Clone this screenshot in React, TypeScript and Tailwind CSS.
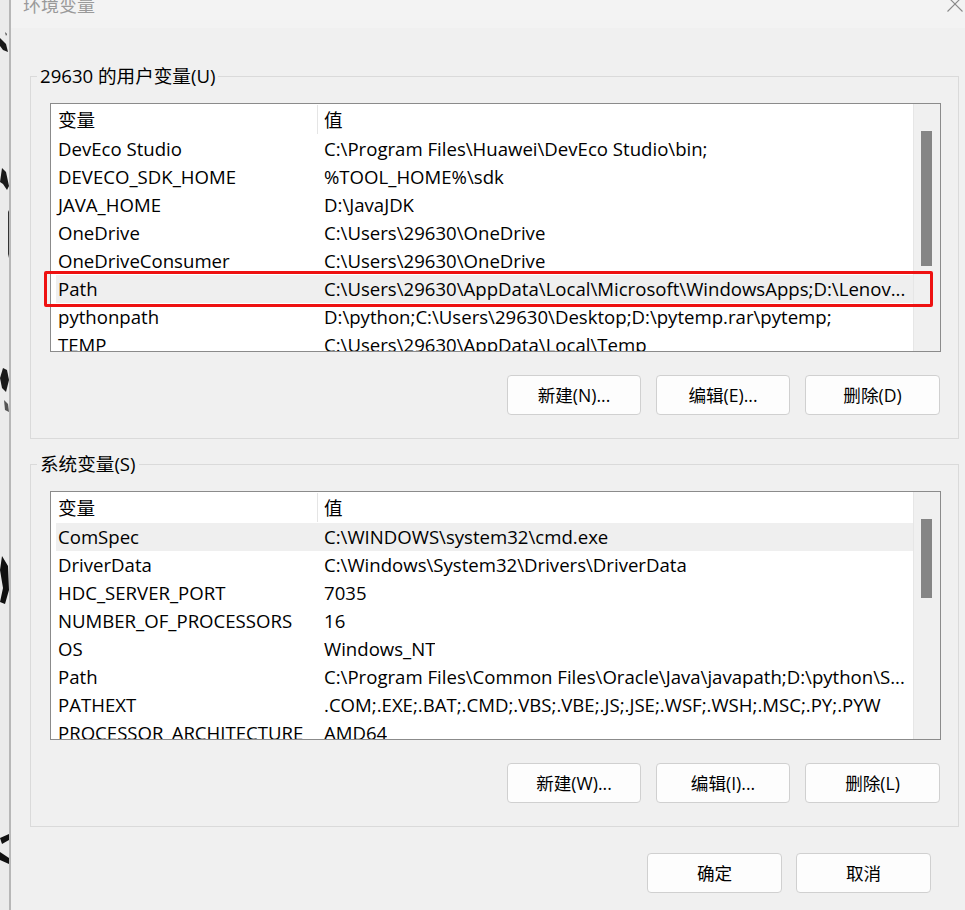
import React from "react";

type Row = { name: string; value: string };

const userVars: Row[] = [
  { name: "DevEco Studio", value: "C:\\Program Files\\Huawei\\DevEco Studio\\bin;" },
  { name: "DEVECO_SDK_HOME", value: "%TOOL_HOME%\\sdk" },
  { name: "JAVA_HOME", value: "D:\\JavaJDK" },
  { name: "OneDrive", value: "C:\\Users\\29630\\OneDrive" },
  { name: "OneDriveConsumer", value: "C:\\Users\\29630\\OneDrive" },
  { name: "Path", value: "C:\\Users\\29630\\AppData\\Local\\Microsoft\\WindowsApps;D:\\Lenov..." },
  { name: "pythonpath", value: "D:\\python;C:\\Users\\29630\\Desktop;D:\\pytemp.rar\\pytemp;" },
  { name: "TEMP", value: "C:\\Users\\29630\\AppData\\Local\\Temp" },
];

const systemVars: Row[] = [
  { name: "ComSpec", value: "C:\\WINDOWS\\system32\\cmd.exe" },
  { name: "DriverData", value: "C:\\Windows\\System32\\Drivers\\DriverData" },
  { name: "HDC_SERVER_PORT", value: "7035" },
  { name: "NUMBER_OF_PROCESSORS", value: "16" },
  { name: "OS", value: "Windows_NT" },
  { name: "Path", value: "C:\\Program Files\\Common Files\\Oracle\\Java\\javapath;D:\\python\\S..." },
  { name: "PATHEXT", value: ".COM;.EXE;.BAT;.CMD;.VBS;.VBE;.JS;.JSE;.WSF;.WSH;.MSC;.PY;.PYW" },
  { name: "PROCESSOR_ARCHITECTURE", value: "AMD64" },
];

function VarList({
  rows,
  selected,
  thumbHeight,
  marked,
}: {
  rows: Row[];
  selected: number;
  thumbHeight: string;
  marked?: number;
}) {
  return (
    <div className="relative w-[891px] h-[249px]">
      <div className="flex h-full border border-[#8b8b8b] bg-white overflow-hidden">
        <div className="flex-1 min-w-0 flex flex-col">
          {/* header */}
          <div className="flex h-[31px] shrink-0 items-center">
            <div className="w-[266px] pl-[7px]">变量</div>
            <div className="w-px h-[29px] bg-[#e5e5e5]" />
            <div className="pl-[6px]">值</div>
          </div>
          {rows.map((r, i) => (
            <div
              key={r.name + i}
              className={
                "flex h-[28px] shrink-0 items-center ml-[5px] whitespace-nowrap " +
                (i === selected ? "bg-[#efefef]" : "")
              }
            >
              <div className="w-[261px] shrink-0 pl-[2px] overflow-hidden">{r.name}</div>
              <div className="pl-[7px] overflow-hidden">{r.value}</div>
            </div>
          ))}
        </div>
        {/* scrollbar */}
        <div className="w-[27px] shrink-0 bg-[#f0f0f0] border-l border-[#e6e6e6] pt-[27px] pl-[7px]">
          <div className={"w-[11px] bg-[#858585] " + thumbHeight} />
        </div>
      </div>
      {marked !== undefined && (
        <div className="absolute left-[-6px] top-[168px] w-[889px] h-[36px] border-[3px] border-[#ee1111] rounded-[2px] pointer-events-none" />
      )}
    </div>
  );
}

function Btn({ label, w = "w-[134px]" }: { label: string; w?: string }) {
  return (
    <button
      className={
        "h-[40px] rounded-[4px] border border-[#d0d0d0] bg-[#fdfdfd] text-[17.6px] text-black " + w
      }
    >
      {label}
    </button>
  );
}

function Group({
  title,
  children,
  className = "",
}: {
  title: string;
  children: React.ReactNode;
  className?: string;
}) {
  return (
    <fieldset className={"border border-[#dadada] pl-[19px] pb-[23px] " + className}>
      <legend className="ml-[-13px] px-[3px] leading-[24px]">{title}</legend>
      <div className="pt-[15px]">{children}</div>
    </fieldset>
  );
}

function InkStrip() {
  // background wallpaper peeking out at the left edge
  return (
    <div className="w-[9px] shrink-0 bg-[#ebebeb]">
      <svg width="9" height="910" viewBox="0 0 9 910">
        <path d="M0 38 L6 44 L8 52 L3 50 L0 46 Z" fill="#1a1a1a" />
        <path d="M5 32 L7 34 L6 36 Z" fill="#444" />
        <path d="M2 168 L6 172 L9 186 L7 190 L3 184 L0 182 Z" fill="#1a1a1a" />
        <path d="M8 210 L9 212 L9 258 L8 254 Z" fill="#333" />
        <path d="M3 368 L7 370 L9 380 L6 392 L2 388 L0 378 Z" fill="#1a1a1a" />
        <path d="M4 400 L8 404 L9 412 L5 410 Z" fill="#555" />
        <path d="M2 556 L8 566 L9 590 L5 604 L0 602 L3 588 L0 570 Z" fill="#111" />
        <path d="M0 838 L9 834 L9 840 L2 844 Z" fill="#111" />
        <path d="M0 852 L9 858 L9 864 L0 860 Z" fill="#111" />
      </svg>
    </div>
  );
}

export default function App() {
  return (
    <div className="flex w-[965px] h-[910px] overflow-hidden bg-[#f0f0f0] text-[18.6px] text-black font-['Open_Sans','Noto_Sans_CJK_SC',sans-serif]">
      <InkStrip />
      <div className="w-[2px] shrink-0 bg-[#b7b7b7]" />
      <div className="flex-1 flex flex-col rounded-bl-[8px]">
        {/* title bar */}
        <div className="h-[28px] shrink-0 bg-[#f3f3f3] flex justify-between overflow-hidden">
          <div className="pl-[12px] mt-[-6px] leading-[22px] text-[18px] text-[#9a9a9a]">环境变量</div>
          <svg width="18" height="18" viewBox="0 0 18 18" className="mt-[-5px] mr-[1px]">
            <path d="M1.5 1.5 L16.5 16.5 M16.5 1.5 L1.5 16.5" stroke="#8a8a8a" strokeWidth="1.1" />
          </svg>
        </div>

        <div className="pl-[19px] pr-[6px] pt-[36px] flex flex-col">
          <Group title="29630 的用户变量(U)">
            <VarList rows={userVars} selected={5} thumbHeight="h-[135px]" marked={5} />
            <div className="flex justify-end gap-[15px] pr-[18px] mt-[23px]">
              <Btn label="新建(N)..." />
              <Btn label="编辑(E)..." />
              <Btn label="删除(D)" w="w-[135px]" />
            </div>
          </Group>

          <Group title="系统变量(S)" className="mt-[13px]">
            <VarList rows={systemVars} selected={0} thumbHeight="h-[79px]" />
            <div className="flex justify-end gap-[15px] pr-[18px] mt-[23px]">
              <Btn label="新建(W)..." />
              <Btn label="编辑(I)..." />
              <Btn label="删除(L)" w="w-[135px]" />
            </div>
          </Group>

          <div className="flex justify-end gap-[14px] pr-[28px] mt-[26px]">
            <Btn label="确定" w="w-[135px]" />
            <Btn label="取消" w="w-[135px]" />
          </div>
        </div>
      </div>
    </div>
  );
}
